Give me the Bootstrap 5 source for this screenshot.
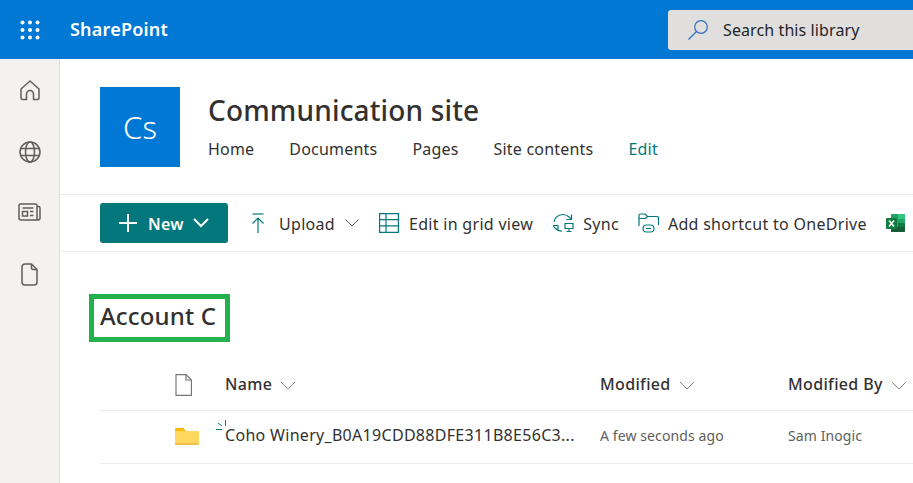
<!DOCTYPE html>
<html lang="en"><head><meta charset="utf-8">
<link href="https://cdn.jsdelivr.net/npm/bootstrap@5.3.0/dist/css/bootstrap.min.css" rel="stylesheet">
<style>
html,body{height:483px;overflow:hidden;background:#fff}
body{font-family:"Noto Sans","Open Sans",sans-serif;color:#323130;font-size:16px}
.sp-top{height:59px;background:#0078d4;color:#fff}
.sp-waffle{width:59px;height:59px}
.sp-brand{font-size:18px;font-weight:600;margin-left:11px;letter-spacing:.2px}
.sp-search{width:260px;height:40px;margin-left:auto;margin-right:-15px;background:#e1dfdd;border-radius:3px;padding-left:20px;font-size:16px;letter-spacing:.1px;gap:15px}
.sp-main{height:424px}
.sp-rail{width:60px;background:#f3f2f1;border-right:1px solid #e1dfdd;padding-top:20px;gap:40px}
.sp-rail svg{display:block}
.sp-news{margin-bottom:2px}
.sp-content{min-width:0;flex:1 1 0}
.sp-head{height:135px;padding:28px 0 0 40px;gap:28px}
.sp-logo{width:80px;height:80px;background:#0078d4;color:#fff;font-size:31px;font-weight:300}
.sp-title{font-size:28px;font-weight:550;line-height:36px;margin-top:5px;margin-bottom:1px;letter-spacing:.15px}
.sp-links{gap:35px;margin-top:9px;font-size:16px;letter-spacing:.2px;line-height:24px}
.sp-edit{color:#03787c}
.sp-cmd{height:58px;border-top:1px solid #edebe9;border-bottom:1px solid #edebe9;padding-left:40px;white-space:nowrap;font-size:16px;letter-spacing:.3px}
.sp-cmd span{margin-top:2px}
.sp-new{width:128px;height:40px;background:#03787c;color:#fff;border-radius:3px;font-weight:600;font-size:16px;padding-left:19px;letter-spacing:.3px}
.sp-newt{margin:0 9px 0 11px}
.sp-cmdi{margin-left:19px;gap:9px}
.sp-first{margin-left:22px;gap:13px}
.sp-grid{margin-left:20px;gap:10px}
.sp-upchev{margin-left:-3px}
.sp-h-wrap{padding:42px 0 0 29px}
.sp-h{width:141px;height:48px;border:5px solid #22b14c;padding-left:6px;font-size:24px;font-weight:550;line-height:34px;letter-spacing:.15px;white-space:nowrap}
.sp-row{margin-left:40px;white-space:nowrap}
.sp-th{height:69px;border-bottom:1px solid #edebe9;font-weight:550;font-size:16px;letter-spacing:.35px;color:#323130;padding-bottom:14px}
.sp-tr{height:53px;border-bottom:1px solid #edebe9;font-size:14px;color:#605e5c;padding-bottom:4px;letter-spacing:.1px}
.sp-ic{width:125px;flex:none;padding-left:75px}
.sp-name{width:375px;flex:none}
.sp-mod{width:188px;flex:none}
.sp-fname{font-size:16px;color:#323130;letter-spacing:.3px}
.sp-th svg{margin-left:8px}
.sp-cell{position:relative}
.sp-spark{position:absolute;left:-9px;top:-3px}
.sp-folder{margin-top:1px}
</style></head><body>
<header class="sp-top d-flex align-items-center">
  <div class="sp-waffle d-flex align-items-center justify-content-center">
    <svg width="20" height="20" viewBox="0 0 20 20" fill="#fff"><circle cx="2.500" cy="2.500" r="2"/><circle cx="10" cy="2.500" r="2"/><circle cx="17.500" cy="2.500" r="2"/><circle cx="2.500" cy="10" r="2"/><circle cx="10" cy="10" r="2"/><circle cx="17.500" cy="10" r="2"/><circle cx="2.500" cy="17.500" r="2"/><circle cx="10" cy="17.500" r="2"/><circle cx="17.500" cy="17.500" r="2"/></svg>
  </div>
  <div class="sp-brand">SharePoint</div>
  <div class="sp-search d-flex align-items-center text-dark flex-shrink-0">
    <svg width="20" height="20" viewBox="0 0 20 20" fill="none" stroke="#2f6fc4" stroke-width="1.200"><circle cx="13" cy="7" r="6.300"/><path d="M8.500 11.500L.5 19.500"/></svg>
    <span class="sp-stext">Search this library</span>
  </div>
</header>
<div class="sp-main d-flex">
  <nav class="sp-rail d-flex flex-column align-items-center flex-shrink-0">
    <svg width="22" height="22" viewBox="0 0 22 22" fill="none" stroke="#605e5c" stroke-width="1.500" stroke-linejoin="round"><path d="M11 2L2 10v9a1.500 1.500 0 0 0 1.500 1.500H7.500V15a3.500 3.500 0 0 1 7 0v5.500h4A1.500 1.500 0 0 0 20 19v-9z"/></svg>
    <svg width="22" height="22" viewBox="0 0 22 22" fill="none" stroke="#605e5c" stroke-width="1.500"><circle cx="11" cy="11" r="10"/><ellipse cx="11" cy="11" rx="4.500" ry="10"/><path d="M1.800 7.500h18.400M1.800 14.500h18.400"/></svg>
    <svg class="sp-news" width="23" height="18" viewBox="0 0 23 18" fill="none" stroke="#605e5c" stroke-width="1.500"><path d="M19 3.500h1.500a1.500 1.500 0 0 1 1.500 1.500v10a2 2 0 0 1-2 2H3a2 2 0 0 1-2-2V2.500A1.500 1.500 0 0 1 2.500 1h15A1.500 1.500 0 0 1 19 2.500V15a2 2 0 0 0 1 2"/><path d="M4.500 8.500h5v4.500h-5zM4.500 5h11M12 8.500h3.500M12 12.500h3.500"/></svg>
    <svg width="17" height="23" viewBox="0 0 17 23" fill="none" stroke="#605e5c" stroke-width="1.500" stroke-linejoin="round"><path d="M4 1h6.500L16 6.500V19a3 3 0 0 1-3 3H4a3 3 0 0 1-3-3V4a3 3 0 0 1 3-3z"/><path d="M10.500 1v4a1.500 1.500 0 0 0 1.500 1.500h4"/></svg>
  </nav>
  <main class="sp-content">
    <section class="sp-head d-flex">
      <div class="sp-logo d-flex align-items-center justify-content-center flex-shrink-0">Cs</div>
      <div>
        <div class="sp-title">Communication site</div>
        <div class="sp-links d-flex"><span>Home</span><span>Documents</span><span>Pages</span><span>Site contents</span><span class="sp-edit">Edit</span></div>
      </div>
    </section>
    <section class="sp-cmd d-flex align-items-center">
      <div class="sp-new d-flex align-items-center flex-shrink-0">
        <svg width="18" height="18" viewBox="0 0 18 18" stroke="#fff" stroke-width="2"><path d="M9 0v18M0 9h18"/></svg>
        <span class="sp-newt">New</span>
        <svg width="16" height="10" viewBox="0 0 16 10" fill="none" stroke="#fff" stroke-width="2"><path d="M1 1l7 7 7-7"/></svg>
      </div>
      <div class="sp-cmdi sp-first d-flex align-items-center">
        <svg width="16" height="21" viewBox="0 0 16 21" fill="none" stroke="#03787c" stroke-width="1.200"><path d="M2.500 1h11"/><path d="M8 20V5M2.500 10.500L8 5l5.500 5.500"/></svg>
        <span>Upload</span>
        <svg class="sp-upchev" width="14" height="8" viewBox="0 0 14 8" fill="none" stroke="#605e5c"><path d="M.5.500l6.500 6.500 6.500-6.500"/></svg>
      </div>
      <div class="sp-cmdi sp-grid d-flex align-items-center">
        <svg width="20" height="20" viewBox="0 0 20 20" fill="none" stroke="#03787c" stroke-width="1.200"><path d="M.6.600h18.800v18.800H.6zM.6 6.700h18.800M.6 12.800h18.800M7 .6v18.800"/></svg>
        <span>Edit in grid view</span>
      </div>
      <div class="sp-cmdi d-flex align-items-center">
        <svg width="22" height="20" viewBox="0 0 22 20" fill="none" stroke="#03787c" stroke-width="1.200"><path d="M2 9a9 9 0 0 1 15-5l2 2M19.500 1.500V6.500h-5M1 12.500h5v5M1.500 13l2 2.500A8 8 0 0 0 10 18"/><path d="M13 10.500h8v5h-8zM17 15.500v3M14.500 18.500h5"/></svg>
        <span>Sync</span>
      </div>
      <div class="sp-cmdi d-flex align-items-center">
        <svg width="21" height="20" viewBox="0 0 21 20" fill="none" stroke="#03787c" stroke-width="1.200"><path d="M1 13V2.500A1.500 1.500 0 0 1 2.500 1H7l2.500 2.500H19a1.500 1.500 0 0 1 1.500 1.500v7M1 5.500h6.500l2-2"/><rect x="5" y="12" width="11" height="7" rx="3.500" fill="#fff"/><path d="M8 15.500h5"/></svg>
        <span>Add shortcut to OneDrive</span>
      </div>
      <div class="sp-cmdi d-flex align-items-center">
        <svg width="19" height="18" viewBox="0 0 19 18"><rect x="5" width="14" height="18" rx="1" fill="#21a366"/><path d="M12 0h6a1 1 0 0 1 1 1v4h-7z" fill="#33c481"/><path d="M12 9h7v4h-7z" fill="#107c41"/><path d="M5 13h14v4a1 1 0 0 1-1 1H6a1 1 0 0 1-1-1z" fill="#185c37"/><rect y="4" width="11" height="11" rx="1" fill="#107c41"/><path d="M3 6.500l5 6M8 6.500l-5 6" stroke="#fff" stroke-width="1.500"/></svg>
      </div>
    </section>
    <div class="sp-h-wrap"><h1 class="sp-h m-0">Account C</h1></div>
    <div class="sp-row sp-th d-flex align-items-end">
      <div class="sp-ic d-flex"><svg class="ms-0" width="17" height="22" viewBox="0 0 17 22" fill="none" stroke="#797775" stroke-width="1.200"><path d="M1 .6h10L16.400 6v15.400H1z"/><path d="M11 .6V6h5.400"/></svg></div>
      <div class="sp-name">Name<svg width="16" height="9" viewBox="0 0 16 9" fill="none" stroke="#8a8886"><path d="M1 1l7 7 7-7"/></svg></div>
      <div class="sp-mod">Modified<svg width="16" height="9" viewBox="0 0 16 9" fill="none" stroke="#8a8886"><path d="M1 1l7 7 7-7"/></svg></div>
      <div>Modified By<svg width="16" height="9" viewBox="0 0 16 9" fill="none" stroke="#8a8886"><path d="M1 1l7 7 7-7"/></svg></div>
    </div>
    <div class="sp-row sp-tr d-flex align-items-center">
      <div class="sp-ic d-flex"><svg class="sp-folder" width="24" height="18" viewBox="0 0 24 18"><path d="M0 2a1 1 0 0 1 1-1h7l3 3h12a1 1 0 0 1 1 1v12a1 1 0 0 1-1 1H1a1 1 0 0 1-1-1z" fill="#ffd75e"/><path d="M0 2a1 1 0 0 1 1-1h7l3 3H0z" fill="#ffb900"/><path d="M0 16h24v1a1 1 0 0 1-1 1H1a1 1 0 0 1-1-1z" fill="#f2c14e"/></svg></div>
      <div class="sp-name sp-cell"><svg class="sp-spark" width="10" height="10" viewBox="0 0 10 10" fill="none" stroke="#03787c" stroke-width="1"><path d="M9.500 0v6M2 3l4 3M0 9.500h6"/></svg><span class="sp-fname">Coho Winery_B0A19CDD88DFE311B8E56C3...</span></div>
      <div class="sp-mod">A few seconds ago</div>
      <div>Sam Inogic</div>
    </div>
  </main>
</div>
</body></html>
